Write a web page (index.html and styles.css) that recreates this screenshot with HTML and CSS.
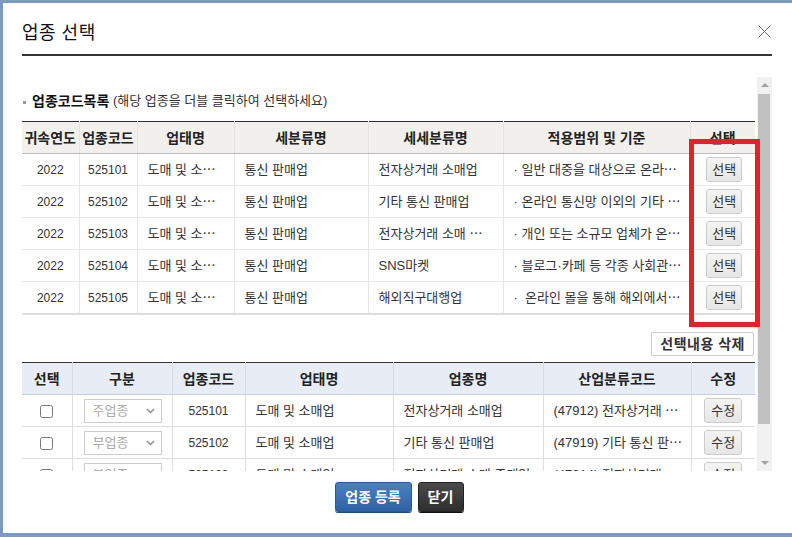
FILE: index.html
```html
<!DOCTYPE html>
<html>
	<head>
		<title>업종 선택</title>
		<link rel="stylesheet" href="styles.css">
	</head>
	<body>
		<div class="modal">
			<div class="head">
				<h1 class="title">업종 선택</h1>
				<svg class="close" width="13" height="13" viewBox="0 0 13 13">
					<path d="M0.5 0.5 L12.5 12.5 M12.5 0.5 L0.5 12.5" stroke="#666" stroke-width="1" fill="none"/>
				</svg>
			</div>

			<div class="panel">
				<div class="scroll">
					<div class="label"><span class="bullet"></span><b>업종코드목록</b> (해당 업종을 더블 클릭하여 선택하세요)</div>

					<table class="list">
						<colgroup>
							<col style="width:57px"><col style="width:58px"><col style="width:97px"><col style="width:134px"><col style="width:135px"><col style="width:187px"><col style="width:65px">
						</colgroup>
						<tr>
							<th>귀속연도</th><th>업종코드</th><th>업태명</th><th>세분류명</th><th>세세분류명</th><th>적용범위 및 기준</th><th>선택</th>
						</tr>
						<tr>
							<td class="c n">2022</td><td class="c n">525101</td><td>도매 및 소⋯</td><td>통신 판매업</td><td>전자상거래 소매업</td><td>· 일반 대중을 대상으로 온라⋯</td><td class="c"><span class="btn">선택</span></td>
						</tr>
						<tr>
							<td class="c n">2022</td><td class="c n">525102</td><td>도매 및 소⋯</td><td>통신 판매업</td><td>기타 통신 판매업</td><td>· 온라인 통신망 이외의 기타 ⋯</td><td class="c"><span class="btn">선택</span></td>
						</tr>
						<tr>
							<td class="c n">2022</td><td class="c n">525103</td><td>도매 및 소⋯</td><td>통신 판매업</td><td>전자상거래 소매 ⋯</td><td>· 개인 또는 소규모 업체가 온⋯</td><td class="c"><span class="btn">선택</span></td>
						</tr>
						<tr>
							<td class="c n">2022</td><td class="c n">525104</td><td>도매 및 소⋯</td><td>통신 판매업</td><td>SNS마켓</td><td>· 블로그·카페 등 각종 사회관⋯</td><td class="c"><span class="btn">선택</span></td>
						</tr>
						<tr>
							<td class="c n">2022</td><td class="c n">525105</td><td>도매 및 소⋯</td><td>통신 판매업</td><td>해외직구대행업</td><td>·&nbsp; 온라인 몰을 통해 해외에서⋯</td><td class="c"><span class="btn">선택</span></td>
						</tr>
					</table>

					<div class="tools"><span class="btn-del">선택내용 삭제</span></div>

					<table class="chosen">
						<colgroup>
							<col style="width:50px"><col style="width:100px"><col style="width:73px"><col style="width:148px"><col style="width:150px"><col style="width:148px"><col style="width:64px">
						</colgroup>
						<tr>
							<th>선택</th><th>구분</th><th>업종코드</th><th>업태명</th><th>업종명</th><th>산업분류코드</th><th>수정</th>
						</tr>
						<tr>
							<td class="c"><input type="checkbox"></td>
							<td class="c"><span class="sel">주업종<svg width="9" height="6" viewBox="0 0 9 6"><path d="M1 1 L4.5 4.5 L8 1" stroke="#999" stroke-width="1.6" fill="none"/></svg></span></td>
							<td class="c n">525101</td><td>도매 및 소매업</td><td>전자상거래 소매업</td><td>(47912) 전자상거래 ⋯</td><td class="c"><span class="btn">수정</span></td>
						</tr>
						<tr>
							<td class="c"><input type="checkbox"></td>
							<td class="c"><span class="sel">부업종<svg width="9" height="6" viewBox="0 0 9 6"><path d="M1 1 L4.5 4.5 L8 1" stroke="#999" stroke-width="1.6" fill="none"/></svg></span></td>
							<td class="c n">525102</td><td>도매 및 소매업</td><td>기타 통신 판매업</td><td>(47919) 기타 통신 판⋯</td><td class="c"><span class="btn">수정</span></td>
						</tr>
						<tr>
							<td class="c"><input type="checkbox"></td>
							<td class="c"><span class="sel">부업종<svg width="9" height="6" viewBox="0 0 9 6"><path d="M1 1 L4.5 4.5 L8 1" stroke="#999" stroke-width="1.6" fill="none"/></svg></span></td>
							<td class="c n">525103</td><td>도매 및 소매업</td><td>전자상거래 소매 중개업</td><td>(47914) 전자상거래 ⋯</td><td class="c"><span class="btn">수정</span></td>
						</tr>
					</table>
				</div>
				<div class="vbar">
					<div class="arrow up"></div>
					<div class="thumb"></div>
					<div class="arrow down"></div>
				</div>
			</div>

			<div class="foot">
				<span class="btn-main">업종 등록</span>
				<span class="btn-dark">닫기</span>
			</div>

			<div class="mark"></div>
		</div>
	</body>
</html>
```

FILE: styles.css
```css
body {
	margin: 0;
	background: #7b9bc4;
	font-family: "Liberation Sans", "Noto Sans CJK KR", sans-serif;
	font-size: 13px;
	color: #333;
}

.modal {
	position: relative;
	margin: 3px 0 0 3px;
	height: 530px;
	background: #fff;
	padding: 0 20px 0 19px;
	overflow: hidden;
}

.head {
	display: flex;
	justify-content: space-between;
	align-items: flex-start;
	padding-top: 18px;
	height: 33px;
	border-bottom: 2px solid #333;
}

.title {
	margin: 0;
	font-size: 18px;
	font-weight: normal;
	line-height: 24px;
	color: #111;
	letter-spacing: 0.5px;
}

.close {
	margin-top: 4px;
	margin-right: 1px;
}

.panel {
	display: flex;
	margin-top: 21px;
	height: 394px;
}

.scroll {
	flex: 1;
	overflow: hidden;
}

.label {
	margin-top: 16px;
	height: 16px;
	line-height: 16px;
	font-size: 13px;
	color: #333;
	display: flex;
	align-items: center;
	white-space: pre;
}

.label b {
	font-size: 14px;
	color: #111;
}

.bullet {
	width: 3px;
	height: 3px;
	background: #999;
	margin: 2px 6px 0 1px;
}

table {
	border-collapse: collapse;
	table-layout: fixed;
	width: 733px;
}

th, td {
	height: 31px;
	padding: 0 10px;
	white-space: nowrap;
	overflow: hidden;
	line-height: 16px;
}

th {
	font-size: 14px;
	font-weight: bold;
	color: #222;
	padding: 0;
	text-align: center;
}

td.c {
	text-align: center;
	padding: 0;
}

td.n {
	font-size: 12px;
}

.list {
	margin-top: 12px;
	border-top: 1px solid #333;
	border-bottom: 2px solid #ddd;
}

.list th {
	background: #f2f0ed;
	border-bottom: 1px solid #bbb;
	border-left: 1px solid #e6e4e1;
}

.list td {
	border-bottom: 1px solid #e6e6e6;
	border-left: 1px solid #e6e6e6;
}

.list th:first-child, .list td:first-child,
.chosen th:first-child, .chosen td:first-child {
	border-left: 0;
}

.btn {
	display: inline-block;
	height: 23px;
	line-height: 23px;
	padding: 0 5px;
	border: 1px solid #ccc;
	border-radius: 3px;
	background: linear-gradient(#f4f4f4, #e6e6e6);
	color: #333;
	font-size: 13px;
	vertical-align: middle;
	margin-left: 3px;
}

.chosen .btn {
	margin-left: 0;
	padding: 0 6px;
}

.tools {
	display: flex;
	justify-content: flex-end;
	margin-top: 17px;
	padding-right: 2px;
}

.btn-del {
	height: 22px;
	line-height: 22px;
	padding: 0 8px;
	border: 1px solid #ccc;
	border-radius: 2px;
	background: #fff;
	font-size: 14px;
	font-weight: bold;
	color: #333;
	letter-spacing: 0.5px;
}

.chosen {
	margin-top: 6px;
	border-top: 1px solid #333;
}

.chosen th {
	background: #e8ecf4;
	border-bottom: 1px solid #c6cbd4;
	border-left: 1px solid #d6dbe4;
}

.chosen td {
	border-bottom: 1px solid #ddd;
	border-left: 1px solid #ddd;
}

.chosen input {
	margin: 0;
	width: 13px;
	height: 13px;
	vertical-align: middle;
}

.sel {
	display: inline-flex;
	align-items: center;
	justify-content: space-between;
	box-sizing: border-box;
	width: 78px;
	height: 24px;
	padding: 0 6px 0 8px;
	border: 1px solid #ccc;
	color: #aaa;
	font-size: 13px;
	vertical-align: middle;
	margin-left: 1px;
}

.vbar {
	width: 15px;
	margin-left: 1px;
	background: #f1f1f1;
	display: flex;
	flex-direction: column;
	align-items: center;
}

.arrow {
	height: 16px;
	width: 15px;
	display: flex;
	align-items: center;
	justify-content: center;
}

.arrow::after {
	content: "";
	border-left: 4px solid transparent;
	border-right: 4px solid transparent;
}

.up::after {
	border-bottom: 4px solid #a3a3a3;
}

.down {
	margin-top: auto;
}

.down::after {
	border-top: 4px solid #a3a3a3;
}

.thumb {
	width: 12px;
	height: 330px;
	margin-top: 1px;
	margin-right: 1px;
	background: #c1c1c1;
}

.foot {
	display: flex;
	justify-content: center;
	gap: 6px;
	margin-top: 11px;
	padding-left: 4px;
}

.btn-main, .btn-dark {
	height: 28px;
	line-height: 28px;
	border-radius: 3px;
	color: #fff;
	font-size: 14px;
	font-weight: bold;
	text-align: center;
}

.btn-main {
	width: 75px;
	background: linear-gradient(#4a80c2, #2f62a5);
	border: 1px solid #2b5a98;
	box-shadow: 0 1px 0 #1f4a80;
}

.btn-dark {
	width: 44px;
	background: linear-gradient(#4a4a4a, #2e2e2e);
	border: 1px solid #222;
	box-shadow: 0 1px 0 #111;
}

.mark {
	position: absolute;
	left: 686px;
	top: 136px;
	width: 71px;
	height: 188px;
	box-sizing: border-box;
	border: 5px solid #e2222b;
}
```
